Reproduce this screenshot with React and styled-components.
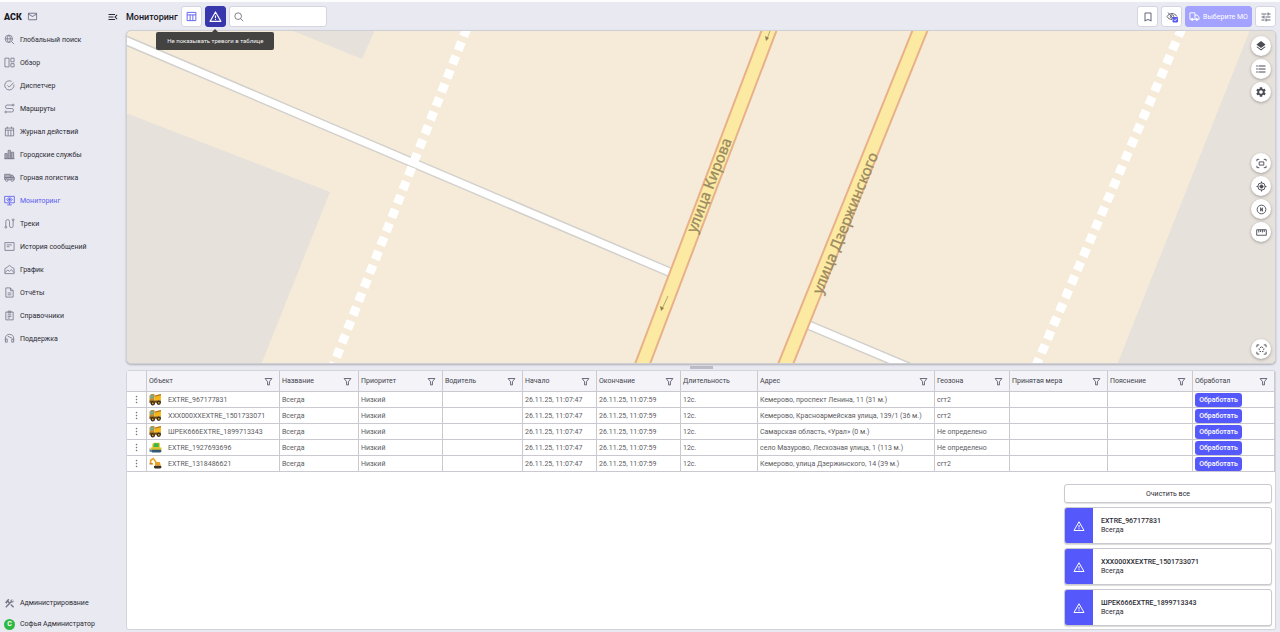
import React from 'react'
import styled, { createGlobalStyle, css } from 'styled-components'
import { MdConstruction, MdFormatListBulleted, MdLayers, MdMailOutline, MdMenuOpen, MdOutlineBookmarkBorder, MdSettings, MdTune } from 'react-icons/md'

const GlobalStyle = createGlobalStyle`
  * {
    box-sizing: border-box;
  }
  body {
    margin: 0;
    background: #e9e9f1;
    color: #2b2b33;
    font-family: Roboto, "Noto Sans", sans-serif;
    font-size: 7px;
    line-height: 10px;
  }
  button, input {
    font: inherit;
    color: inherit;
    margin: 0;
    padding: 0;
  }
  button {
    cursor: pointer;
  }
  svg {
    display: block;
    flex: none;
  }
`

const Page = styled.div`
  display: grid;
  grid-template-columns: 126px minmax(0, 1fr);
  height: 100vh;
  border-top: 2px solid #fdfdfe;
`

/* sidebar */

const Sidebar = styled.aside`
  display: flex;
  flex-direction: column;
`

const Brand = styled.div`
  display: flex;
  align-items: center;
  gap: 5px;
  height: 26px;
  padding: 3px 7px 0 4px;
`

const Logo = styled.span`
  font-size: 9px;
  font-weight: 900;
  color: #16161c;
`

const PlainButton = styled.button`
  display: flex;
  border: 0;
  background: none;
  color: ${p => p.$color || '#77778a'};
  margin-left: ${p => (p.$push ? 'auto' : 0)};
`

const Nav = styled.nav`
  display: flex;
  flex-direction: column;
  flex: 1;
`

const NavLink = styled.a`
  display: flex;
  align-items: center;
  gap: 5px;
  height: ${p => (p.$compact ? 16 : 23)}px;
  padding-left: 4px;
  color: ${p => (p.$active ? '#5a5cf0' : '#2b2b33')};
  text-decoration: none;
  white-space: nowrap;

  svg {
    color: ${p => (p.$active ? '#5a5cf0' : '#77778a')};
  }
`

const SidebarFooter = styled.div`
  display: flex;
  flex-direction: column;
  gap: 5px;
  margin-top: auto;
`

const Avatar = styled.span`
  display: flex;
  align-items: center;
  justify-content: center;
  width: 11px;
  height: 11px;
  border-radius: 50%;
  background: #2fb944;
  color: #fff;
  font-weight: 700;
`

/* toolbar */

const Main = styled.main`
  display: grid;
  grid-template-columns: minmax(0, 1fr);
  grid-template-rows: 28px minmax(0, 334fr) 6px minmax(0, 260fr);
  padding: 0 4px 2px 0;
  height: 100%;
  min-height: 0;
`

const Toolbar = styled.header`
  display: flex;
  align-items: center;
  gap: 3px;
  padding-top: 1px;
`

const Title = styled.h1`
  margin: 0;
  font-size: 9px;
  font-weight: 500;
  color: #16161c;
`

const Spacer = styled.div`
  flex: 1;
`

const ToolButton = styled.button`
  position: relative;
  display: flex;
  align-items: center;
  justify-content: center;
  gap: 3px;
  width: ${p => p.$width || 21}px;
  height: 21px;
  border: 1px solid #d5d5e2;
  border-radius: 3px;
  background: #fff;
  color: #66667a;
  white-space: nowrap;
  ${p => p.$accent && css`color: #5a5cf0;`}
  ${p => p.$pressed && css`
    border-color: #3838ac;
    background: #3838ac;
    color: #fff;
  `}
  ${p => p.$muted && css`
    border-color: #a3a3ff;
    background: #a3a3ff;
    color: #fff;
  `}
`

const Tooltip = styled.span`
  position: absolute;
  z-index: 2;
  top: 25px;
  left: 50%;
  width: 118px;
  padding: 4px 0;
  transform: translateX(-50%);
  border-radius: 2px;
  background: #454341;
  color: #f2f2f2;
  font-size: 6px;
  text-align: center;

  &::before {
    content: '';
    position: absolute;
    top: -3px;
    left: 50%;
    margin-left: -3px;
    border: 3px solid transparent;
    border-top: 0;
    border-bottom-color: #454341;
  }
`

const SearchBox = styled.label`
  display: flex;
  align-items: center;
  gap: 3px;
  width: 98px;
  height: 21px;
  padding: 0 4px;
  border: 1px solid #d5d5e2;
  border-radius: 3px;
  background: #fff;
  color: #66667a;
`

const SearchInput = styled.input`
  flex: 1;
  min-width: 0;
  border: 0;
  outline: 0;
  background: none;
`

/* map */

const MapPanel = styled.section`
  position: relative;
  border: 1px solid #cfcfd6;
  border-radius: 5px;
  overflow: hidden;
  background: #f5ebd8;
  box-shadow: 0 1px 2px rgba(0, 0, 0, 0.25);
`

const MapCanvas = styled.svg`
  width: 100%;
  height: 100%;
`

const StreetLabel = styled.text`
  font-family: "Noto Sans", "Open Sans", sans-serif;
  font-size: 15px;
  fill: #9b8a62;
  stroke: #9b8a62;
  stroke-width: 0.3;
  text-anchor: middle;
`

const MapControls = styled.div`
  position: absolute;
  top: 0;
  right: 0;
  bottom: 0;
  display: grid;
  grid-template-rows: 1fr auto 1fr;
  padding: 5px 4px 4px;
`

const ControlGroup = styled.div`
  display: flex;
  flex-direction: column;
  gap: 3px;
  align-self: ${p => p.$align || 'start'};
`

const RoundButton = styled.button`
  display: flex;
  align-items: center;
  justify-content: center;
  width: 20px;
  height: 20px;
  border: 0;
  border-radius: 50%;
  background: #fff;
  color: #4c4c55;
  box-shadow: 0 1px 3px rgba(0, 0, 0, 0.3);
`

const Splitter = styled.div`
  display: flex;
  align-items: center;
  justify-content: center;
`

const SplitterHandle = styled.div`
  width: 23px;
  height: 3px;
  background: #bcbcc6;
`

/* table */

const TablePanel = styled.section`
  position: relative;
  border: 1px solid #d3d3dc;
  border-radius: 3px;
  background: #fff;
`

const Table = styled.table`
  width: 100%;
  table-layout: fixed;
  border-collapse: separate;
  border-spacing: 0;
`

const HeadCell = styled.th`
  height: 21px;
  padding: 0 6px 0 2px;
  border-right: 1px solid #c9c9cf;
  border-bottom: 1px solid #c9c9cf;
  background: #f3f3f8;
  color: #44444d;
  font-weight: 400;
  text-align: left;
`

const HeadContent = styled.div`
  display: flex;
  align-items: center;
  justify-content: space-between;
  white-space: nowrap;
`

const Cell = styled.td`
  height: 16px;
  padding: 0 2px;
  border-right: 1px solid #c9c9cf;
  border-bottom: 1px solid #c9c9cf;
  color: #5c5c62;
  white-space: nowrap;
`

const ObjectName = styled.div`
  display: flex;
  align-items: center;
  gap: 6px;
`

const ProcessButton = styled.button`
  display: block;
  width: 47px;
  height: 14px;
  border: 0;
  border-radius: 3px;
  background: #5558fa;
  color: #fff;
  font-weight: 500;
`

/* notifications */

const Alerts = styled.div`
  position: absolute;
  right: 3px;
  bottom: 3px;
  display: flex;
  flex-direction: column;
  gap: 4px;
  width: 208px;
`

const ClearButton = styled.button`
  height: 19px;
  border: 1px solid #c9c9cf;
  border-radius: 3px;
  background: #fff;
  box-shadow: 0 1px 1px rgba(0, 0, 0, 0.12);
`

const AlertCard = styled.article`
  display: flex;
  height: 37px;
  border: 1px solid #c9c9cf;
  border-radius: 3px;
  overflow: hidden;
  background: #fff;
  box-shadow: 0 1px 1px rgba(0, 0, 0, 0.15);
`

const AlertMark = styled.div`
  display: flex;
  align-items: center;
  justify-content: center;
  width: 28px;
  background: #5558fa;
  color: #fff;
`

const AlertBody = styled.div`
  display: flex;
  flex-direction: column;
  justify-content: center;
  padding-left: 8px;
  line-height: 9px;
`

const AlertTitle = styled.strong`
  font-weight: 500;
`

/* icons, all on a 24px grid */

const Icon = ({ size = 11, width = 1.8, children }) => (
  <svg width={size} height={size} viewBox="0 0 24 24" fill="none" stroke="currentColor" strokeWidth={width} aria-hidden="true">
    {children}
  </svg>
)

const WarningIcon = ({ size = 13 }) => (
  <Icon size={size} width={2}>
    <path d="M12 3.5 22 21H2z" strokeLinejoin="round" />
    <path d="M12 10v5M12 16.5v2" />
  </Icon>
)

const FilterIcon = () => (
  <Icon size={9} width={2.4}>
    <path d="M3 4h18l-6.5 8.5V21h-5v-8.5z" strokeLinejoin="round" />
  </Icon>
)

const navIcons = {
  search: <><circle cx="10.5" cy="10.5" r="8" /><path d="M2.5 10.5h16M10.5 2.5c-4.5 5-4.5 11 0 16M10.5 2.5c4.5 5 4.5 11 0 16M16.5 16.5 22 22" /></>,
  overview: <path d="M2 2.500h9v19H2zM15 2.500h7v8h-7zM15 14.500h7v7h-7z" />,
  check: <><path d="M21.5 10a10 10 0 1 1-5-7" /><path d="m7.5 11.5 4 4L21 5.5" /></>,
  route: <><path d="M18 4.5H7A3.7 3.7 0 0 0 7 12h10a3.700 3.700 0 0 1 0 7.500H7" /><circle cx="20" cy="4.5" r="2" /><circle cx="4" cy="19.5" r="2" /></>,
  calendar: <path d="M3 4.5h18v17H3zM3 9h18M7.5 1.5v4M16.5 1.5v4M9 9v12M15 9v12" />,
  city: <path d="M2 10h5v11H2zM9 3h5v18H9zM16 7h5v14h-5zM1 21h22" fill="currentColor" fillOpacity=".5" />,
  truck: <><path d="M1.5 5h12v7h-12zM1.5 12h21v5h-21zM15 12V7h4l3 5" fill="currentColor" fillOpacity=".5" /><circle cx="6" cy="18" r="2.5" fill="#e9e9f1" /><circle cx="18" cy="18" r="2.5" fill="#e9e9f1" /></>,
  monitor: <><path d="M1.5 3h21v14h-21zM12 17v4M7 21.5h10" /><path d="M6 10c3-5 9-5 12 0-3 5-9 5-12 0z" /><circle cx="12" cy="10" r="1.8" fill="currentColor" /></>,
  track: <><path d="M4 18V7.5a4 4 0 0 1 8 0V17a4 4 0 0 0 8 0V6" /><circle cx="4" cy="20" r="2" /><circle cx="20" cy="4" r="2" /></>,
  message: <path d="M2 3.500h20v17H2zM6 8.500h11M6 12.500h6" />,
  chart: <path d="M2 21V10l5-3 5-4 5 4 5 3v11zM2 19l6-6 4 3 4-4 6 7" />,
  report: <path d="M4 2h10l6 6v14H4zM14 2v6h6M8 13h8M8 17h8" />,
  clipboard: <path d="M4 4.5h16v17H4zM9 2.5h6v4H9zM8 10.500h8M8 14h8M8 17.500h5" />,
  support: <path d="M3 16v-4a9 9 0 0 1 18 0v4M3 13h4v7H3zM17 13h4v7h-4zM8 7c3 2 6 2 9 4" />,
}

const menu = [
  { icon: 'search', label: 'Глобальный поиск' },
  { icon: 'overview', label: 'Обзор' },
  { icon: 'check', label: 'Диспетчер' },
  { icon: 'route', label: 'Маршруты' },
  { icon: 'calendar', label: 'Журнал действий' },
  { icon: 'city', label: 'Городские службы' },
  { icon: 'truck', label: 'Горная логистика' },
  { icon: 'monitor', label: 'Мониторинг', active: true },
  { icon: 'track', label: 'Треки' },
  { icon: 'message', label: 'История сообщений' },
  { icon: 'chart', label: 'График' },
  { icon: 'report', label: 'Отчёты' },
  { icon: 'clipboard', label: 'Справочники' },
  { icon: 'support', label: 'Поддержка' },
]

const columns = [
  { label: '', width: 20 },
  { label: 'Объект', width: 133, filter: true },
  { label: 'Название', width: 79, filter: true },
  { label: 'Приоритет', width: 84, filter: true },
  { label: 'Водитель', width: 80, filter: true },
  { label: 'Начало', width: 74, filter: true },
  { label: 'Окончание', width: 84, filter: true },
  { label: 'Длительность', width: 77 },
  { label: 'Адрес', width: 177, filter: true },
  { label: 'Геозона', width: 75, filter: true },
  { label: 'Принятая мера', width: 98, filter: true },
  { label: 'Пояснение', width: 85, filter: true },
  { label: 'Обработал', width: 82, filter: true },
]

const rows = [
  { kind: 'truck', name: 'EXTRE_967177831', address: 'Кемерово, проспект Ленина, 11 (31 м.)', zone: 'сгт2' },
  { kind: 'truck', name: 'XXX000XXEXTRE_1501733071', address: 'Кемерово, Красноармейская улица, 139/1 (36 м.)', zone: 'сгт2' },
  { kind: 'truck', name: 'ШРЕК666EXTRE_1899713343', address: 'Самарская область, «Урал» (0 м.)', zone: 'Не определено' },
  { kind: 'dozer', name: 'EXTRE_1927693696', address: 'село Мазурово, Лесхозная улица, 1 (113 м.)', zone: 'Не определено' },
  { kind: 'digger', name: 'EXTRE_1318486621', address: 'Кемерово, улица Дзержинского, 14 (39 м.)', zone: 'сгт2' },
]

const VehicleIcon = ({ kind }) => (
  <svg width="13" height="13" viewBox="0 0 24 24" aria-hidden="true">
    {kind === 'truck' && (
      <>
        <path d="M1 5 4 2h6v16H1z" fill="#c98d1d" />
        <path d="M2 6l2-3h4v7H2z" fill="#6fae9f" />
        <path d="M10 5 22 2v12l-12 1z" fill="#f7b51c" />
        <path d="M10 5 22 2v2L10 7z" fill="#a8741a" />
        <path d="M1 14h21v4H1z" fill="#6e4f1c" />
        <circle cx="7" cy="19" r="4" fill="#3b2d1c" />
        <circle cx="18" cy="18" r="4" fill="#3b2d1c" />
        <circle cx="7" cy="19" r="1.6" fill="#e9a52c" />
        <circle cx="18" cy="18" r="1.6" fill="#e9a52c" />
      </>
    )}
    {kind === 'dozer' && (
      <>
        <path d="M6 6 9 3h11v11H6z" fill="#e3cb26" />
        <path d="M9 4h9v7H8z" fill="#3fb44a" />
        <path d="M3 12h20v5H3z" fill="#d9c22b" />
        <path d="M1 13l4 7H1z" fill="#3c72a8" />
        <rect x="4" y="16" width="19" height="5" rx="2.5" fill="#2f5876" />
      </>
    )}
    {kind === 'digger' && (
      <>
        <path d="M3 12V6l5-3 6 8" fill="none" stroke="#eaa126" strokeWidth="3" />
        <path d="M1 11h6v3H1z" fill="#c98719" />
        <path d="M11 9h9l2 7H11z" fill="#eaa126" />
        <rect x="9" y="16" width="14" height="5" rx="2.5" fill="#3b3126" />
      </>
    )}
  </svg>
)

const CityMap = () => (
  <MapCanvas viewBox="127 31 1148 332" preserveAspectRatio="xMidYMid slice" aria-label="Карта">
    <g fill="#e6e1db">
      <path d="M291 30 362 59 375 30z" />
      <path d="M126 113 330 192 261 365H126z" />
      <path d="M1250 30 1117 365H1278V30z" />
    </g>
    <g fill="none" stroke="#d2d0cc" strokeWidth="10">
      <path d="M120 38 674 274M806 324 920 372" />
    </g>
    <g fill="none" stroke="#fff">
      <path d="M120 38 674 274M806 324 920 372" strokeWidth="7" />
      <path d="M467 28 333 366M1182 28 1035 368" strokeWidth="9" strokeDasharray="9 6" />
    </g>
    <g fill="none" stroke="#e8b189" strokeWidth="16">
      <path d="M770 28 641 368M921 28 784 368" />
    </g>
    <g fill="none" stroke="#fdeaa2" strokeWidth="12">
      <path d="M770 28 641 368M921 28 784 368" />
    </g>
    <path d="M668 296 662 309M770 31 767 39" stroke="#b3a472" strokeWidth="1" />
    <path d="M660 306 664 308 661 311zM765 36 769 38 766 41z" fill="#8f8253" />
    <StreetLabel transform="translate(714 187) rotate(-69)">улица Кирова</StreetLabel>
    <StreetLabel transform="translate(850 225) rotate(-68)">улица Дзержинского</StreetLabel>
  </MapCanvas>
)

const App = () => (
  <>
    <GlobalStyle />
    <Page>
      <Sidebar>
        <Brand>
          <Logo>АСК</Logo>
          <PlainButton aria-label="Почта"><MdMailOutline size={11} /></PlainButton>
          <PlainButton $push $color="#2b2b33" aria-label="Свернуть меню"><MdMenuOpen size={12} /></PlainButton>
        </Brand>
        <Nav>
          {menu.map(item => (
            <NavLink key={item.label} href="#" $active={item.active}>
              <Icon>{navIcons[item.icon]}</Icon>
              {item.label}
            </NavLink>
          ))}
          <SidebarFooter>
            <NavLink href="#" $compact>
              <MdConstruction size={11} />
              Администрирование
            </NavLink>
            <NavLink href="#" $compact>
              <Avatar>С</Avatar>
              Софья Администратор
            </NavLink>
          </SidebarFooter>
        </Nav>
      </Sidebar>

      <Main>
        <Toolbar>
          <Title>Мониторинг</Title>
          <ToolButton $accent aria-label="Таблица">
            <Icon width={2}><path d="M2.5 3h19v18h-19zM2.5 8.5h19M9 8.5V21M15 8.5V21" /></Icon>
          </ToolButton>
          <ToolButton $pressed aria-label="Тревоги">
            <WarningIcon />
            <Tooltip role="tooltip">Не показывать тревоги в таблице</Tooltip>
          </ToolButton>
          <SearchBox>
            <Icon size={10} width={2}><circle cx="10" cy="10" r="8" /><path d="m16 16 6 6" /></Icon>
            <SearchInput type="text" aria-label="Поиск" />
          </SearchBox>
          <Spacer />
          <ToolButton aria-label="Закладки"><MdOutlineBookmarkBorder size={12} /></ToolButton>
          <ToolButton aria-label="Скрыть объекты">
            <Icon size={12} width={2}>
              <path d="M2 11c5-8 15-8 20 0M2 11c2 4 6 6 10 6M4 3l15 17" />
              <circle cx="12" cy="11" r="3.5" />
              <path d="M14 13h9v9h-9z" fill="#5a5cf0" stroke="#5a5cf0" />
              <path d="m16 17.5 2 2 3.500-4" stroke="#fff" />
            </Icon>
          </ToolButton>
          <ToolButton $muted $width={67}>
            <Icon size={11} width={2}>
              <path d="M2 18V4h11v14M13 9h5l4 5v4H2" />
              <circle cx="7" cy="18.5" r="2" fill="#fff" />
              <circle cx="17" cy="18.5" r="2" fill="#fff" />
            </Icon>
            Выберите МО
          </ToolButton>
          <ToolButton aria-label="Настройки"><MdTune size={12} /></ToolButton>
        </Toolbar>

        <MapPanel>
          <CityMap />
          <MapControls>
            <ControlGroup>
              <RoundButton aria-label="Слои"><MdLayers size={12} /></RoundButton>
              <RoundButton aria-label="Список"><MdFormatListBulleted size={12} /></RoundButton>
              <RoundButton aria-label="Настройки карты"><MdSettings size={12} /></RoundButton>
            </ControlGroup>
            <ControlGroup>
              <RoundButton aria-label="Показать все">
                <Icon width={2}><path d="M2 7V3h5M17 3h5v4M22 17v4h-5M7 21H2v-4M7 8.5h10v7H7z" /></Icon>
              </RoundButton>
              <RoundButton aria-label="Моё положение">
                <Icon width={2}><circle cx="12" cy="12" r="8" /><circle cx="12" cy="12" r="3.5" fill="currentColor" /><path d="M12 1v4M12 19v4M1 12h4M19 12h4" /></Icon>
              </RoundButton>
              <RoundButton aria-label="Компас">
                <Icon width={2}><circle cx="12" cy="12" r="9.5" /><path d="M10 16V8l4 8V8" /></Icon>
              </RoundButton>
              <RoundButton aria-label="Линейка">
                <Icon width={2}><path d="M1.5 6h21v12h-21zM6 6v6M10 6v5M14 6v6M18 6v5" /></Icon>
              </RoundButton>
            </ControlGroup>
            <ControlGroup $align="end">
              <RoundButton aria-label="Выделить область">
                <Icon width={2}><path d="M2 7V2h5M17 2h5v5M22 17v5h-5M7 22H2v-5" /><path d="m12 6 5.5 4-2 6.5h-7l-2-6.5z" strokeDasharray="4 2" /></Icon>
              </RoundButton>
            </ControlGroup>
          </MapControls>
        </MapPanel>

        <Splitter>
          <SplitterHandle />
        </Splitter>

        <TablePanel>
          <Table>
            <colgroup>
              {columns.map((column, i) => <col key={i} width={column.width} />)}
            </colgroup>
            <thead>
              <tr>
                {columns.map((column, i) => (
                  <HeadCell key={i} scope="col">
                    <HeadContent>
                      {column.label}
                      {column.filter && (
                        <PlainButton $color="#5c5c70" aria-label={`Фильтр: ${column.label}`}><FilterIcon /></PlainButton>
                      )}
                    </HeadContent>
                  </HeadCell>
                ))}
              </tr>
            </thead>
            <tbody>
              {rows.map(row => (
                <tr key={row.name}>
                  <Cell>
                    <PlainButton $color="#77777f" aria-label="Действия">
                      <svg width="15" height="9" viewBox="0 0 15 9" fill="currentColor">
                        <path d="M7 1h1v1H7zM7 4h1v1H7zM7 7h1v1H7z" stroke="currentColor" strokeWidth=".4" />
                      </svg>
                    </PlainButton>
                  </Cell>
                  <Cell>
                    <ObjectName>
                      <VehicleIcon kind={row.kind} />
                      {row.name}
                    </ObjectName>
                  </Cell>
                  <Cell>Всегда</Cell>
                  <Cell>Низкий</Cell>
                  <Cell />
                  <Cell>26.11.25, 11:07:47</Cell>
                  <Cell>26.11.25, 11:07:59</Cell>
                  <Cell>12с.</Cell>
                  <Cell>{row.address}</Cell>
                  <Cell>{row.zone}</Cell>
                  <Cell />
                  <Cell />
                  <Cell><ProcessButton>Обработать</ProcessButton></Cell>
                </tr>
              ))}
            </tbody>
          </Table>

          <Alerts>
            <ClearButton>Очистить все</ClearButton>
            {rows.slice(0, 3).map(row => (
              <AlertCard key={row.name}>
                <AlertMark><WarningIcon size={12} /></AlertMark>
                <AlertBody>
                  <AlertTitle>{row.name}</AlertTitle>
                  <span>Всегда</span>
                </AlertBody>
              </AlertCard>
            ))}
          </Alerts>
        </TablePanel>
      </Main>
    </Page>
  </>
)

export default App
